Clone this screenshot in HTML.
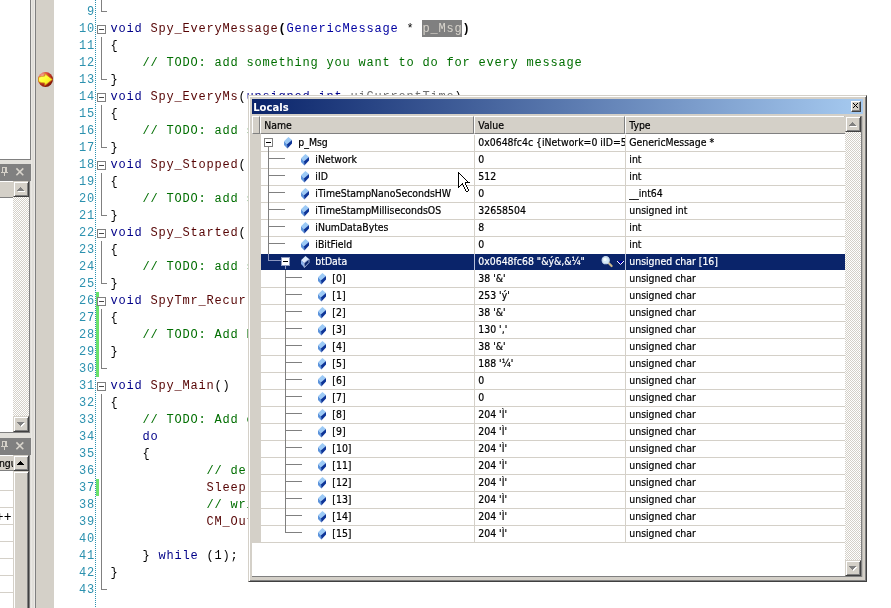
<!DOCTYPE html><html><head><meta charset="utf-8"><title>Locals</title><style>
html,body{margin:0;padding:0}
body{width:891px;height:608px;overflow:hidden;background:#fff;position:relative}
div,span,svg{position:absolute;box-sizing:border-box}
.r{position:absolute}
.code{font-family:"Liberation Mono",monospace;font-size:12px;letter-spacing:0.8px;line-height:17px;height:17px;white-space:pre;color:#000}
.code span{position:static}
.ln{left:62px;width:33.1px;text-align:right;color:#2b91af}
.tx{left:110.4px}
.k{color:#000088}.i{color:#560404}.t{color:#0000a0}.c{color:#006e00}.b{font-weight:bold}
.hl{color:#d8d4cc}.p{color:#707070}
.ui{-webkit-text-stroke-width:0.2px;font-family:"DejaVu Sans Condensed","DejaVu Sans","Liberation Sans",sans-serif;font-stretch:condensed;font-size:10.4px;line-height:17px;height:17px;white-space:pre;color:#000}
.ui span{position:static}
.chk{background-color:#fff;background-image:conic-gradient(#d4d0c8 25%,#fff 0 50%,#d4d0c8 0 75%,#fff 0);background-size:2px 2px}
.btn{background:#d4d0c8;border:1px solid;border-color:#d4d0c8 #404040 #404040 #d4d0c8;box-shadow:inset 1px 1px 0 #fff,inset -1px -1px 0 #808080}
</style></head><body><div id="root" style="left:0;top:0;width:891px;height:608px;will-change:transform">
<div class="" style="left:31px;top:0px;width:4px;height:608px;background:linear-gradient(90deg,#eae8e4 0 1px,#e1dfda 1px 3px,#ebe9e6 3px);"></div>
<div class="" style="left:35px;top:0px;width:1px;height:608px;background:#808080;"></div>
<div class="" style="left:36px;top:0px;width:18px;height:608px;background:#d4d0c8;"></div>
<div class="" style="left:30px;top:0px;width:1px;height:160px;background:#808080;"></div>
<div class="" style="left:0px;top:159px;width:31px;height:1px;background:#808080;"></div>
<div class="" style="left:0px;top:160px;width:31px;height:4px;background:#e2e0db;"></div>
<svg style="left:0;top:164px" width="31" height="17" viewBox="0 0 31 17" shape-rendering="crispEdges"><rect width="31" height="17" fill="#808080"/><g fill="#d4d0c8"><rect x="2" y="3" width="5" height="1"/><rect x="2" y="3" width="1" height="5"/><rect x="5" y="3" width="2" height="5"/><rect x="1" y="8" width="7" height="1"/><rect x="4" y="9" width="1" height="3"/></g><g stroke="#d8d4cc" stroke-width="1.55" shape-rendering="auto"><path d="M16.4 4.4 L23.3 11.3 M23.3 4.4 L16.4 11.3" fill="none"/></g></svg>
<div class="" style="left:0px;top:181px;width:29px;height:251px;background:#d4d0c8;"></div>
<div class="" style="left:29px;top:181px;width:1px;height:252px;background:#808080;"></div>
<div class="" style="left:30px;top:181px;width:1px;height:257px;background:#e1dfda;"></div>
<div class="" style="left:0px;top:181px;width:13px;height:17px;background:#d4d0c8;border-top:1px solid #fff;border-bottom:1px solid #808080"></div>
<div class="" style="left:0px;top:198px;width:13px;height:234px;background:#fff;"></div>
<div class="chk" style="left:13px;top:197px;width:16px;height:219px;background:;"></div>
<div class="btn" style="left:13px;top:181px;width:16px;height:16px"></div>
<svg style="left:0;top:0" width="891" height="608" shape-rendering="crispEdges"><path d="M20 187 h1 v1 h1 v1 h1 v1 h1 v1 h-7 v-1 h1 v-1 h1 v-1 h1 z" fill="#fff" transform="translate(1,1)"/><path d="M20 187 h1 v1 h1 v1 h1 v1 h1 v1 h-7 v-1 h1 v-1 h1 v-1 h1 z" fill="#808080"/></svg>
<div class="btn" style="left:13px;top:416px;width:16px;height:16px"></div>
<svg style="left:0;top:0" width="891" height="608" shape-rendering="crispEdges"><path d="M17 422 h7 v1 h-1 v1 h-1 v1 h-1 v1 h-1 v-1 h-1 v-1 h-1 v-1 h-1 z" fill="#fff" transform="translate(1,1)"/><path d="M17 422 h7 v1 h-1 v1 h-1 v1 h-1 v1 h-1 v-1 h-1 v-1 h-1 v-1 h-1 z" fill="#808080"/></svg>
<div class="" style="left:0px;top:432px;width:30px;height:1px;background:#808080;"></div>
<div class="" style="left:0px;top:433px;width:31px;height:5px;background:#e2e0db;"></div>
<svg style="left:0;top:438px" width="31" height="17" viewBox="0 0 31 17" shape-rendering="crispEdges"><rect width="31" height="17" fill="#808080"/><g fill="#d4d0c8"><rect x="2" y="3" width="5" height="1"/><rect x="2" y="3" width="1" height="5"/><rect x="5" y="3" width="2" height="5"/><rect x="1" y="8" width="7" height="1"/><rect x="4" y="9" width="1" height="3"/></g><g stroke="#d8d4cc" stroke-width="1.55" shape-rendering="auto"><path d="M16.4 4.4 L23.3 11.3 M23.3 4.4 L16.4 11.3" fill="none"/></g></svg>
<div class="" style="left:0px;top:455px;width:29px;height:153px;background:#d4d0c8;"></div>
<div class="" style="left:29px;top:455px;width:1px;height:153px;background:#808080;"></div>
<div class="" style="left:30px;top:455px;width:1px;height:153px;background:#e1dfda;"></div>
<div class="" style="left:0px;top:455px;width:13px;height:16px;background:#d4d0c8;border-top:1px solid #fff;border-bottom:1px solid #808080"></div>
<div class="ui" style="left:-12px;top:455px;width:25px;overflow:hidden">Langu</div>
<div class="" style="left:0px;top:471px;width:13px;height:137px;background:#fff;"></div>
<div class="" style="left:0px;top:490px;width:13px;height:1px;background:#d4d0c8;"></div>
<div class="" style="left:0px;top:507px;width:13px;height:1px;background:#d4d0c8;"></div>
<div class="" style="left:0px;top:524px;width:13px;height:1px;background:#d4d0c8;"></div>
<div class="" style="left:0px;top:541px;width:13px;height:1px;background:#d4d0c8;"></div>
<div class="" style="left:0px;top:558px;width:13px;height:1px;background:#d4d0c8;"></div>
<div class="" style="left:0px;top:575px;width:13px;height:1px;background:#d4d0c8;"></div>
<div class="" style="left:0px;top:592px;width:13px;height:1px;background:#d4d0c8;"></div>
<div class="ui" style="left:-20px;top:508px;width:31.5px;text-align:right">C++</div>
<div class="btn" style="left:13px;top:455px;width:16px;height:16px"></div>
<svg style="left:0;top:0" width="891" height="608" shape-rendering="crispEdges"><path d="M20 461 h1 v1 h1 v1 h1 v1 h1 v1 h-7 v-1 h1 v-1 h1 v-1 h1 z" fill="#000"/></svg>
<div class="btn" style="left:13px;top:471px;width:16px;height:150px"></div>
<div style="left:95px;top:0;width:1px;height:608px;background-image:linear-gradient(#2b91af 50%,#fff 0);background-size:1px 2px"></div>
<div class="" style="left:422px;top:20px;width:40px;height:17px;background:#808080;"></div>
<div class="" style="left:96px;top:292px;width:3px;height:85px;background:#6ce26c;"></div>
<div class="" style="left:96px;top:479px;width:3px;height:17px;background:#6ce26c;"></div>
<div class="" style="left:101px;top:0px;width:1px;height:12px;background:#808080;"></div>
<div class="" style="left:101px;top:11px;width:6px;height:1px;background:#808080;"></div>
<div style="left:97px;top:25px;width:9px;height:9px;background:#fff;border:1px solid #808080"></div>
<div class="" style="left:99px;top:29px;width:5px;height:1px;background:#484848;"></div>
<div class="" style="left:101px;top:37px;width:1px;height:43px;background:#808080;"></div>
<div class="" style="left:101px;top:79px;width:6px;height:1px;background:#808080;"></div>
<div style="left:97px;top:93px;width:9px;height:9px;background:#fff;border:1px solid #808080"></div>
<div class="" style="left:99px;top:97px;width:5px;height:1px;background:#484848;"></div>
<div class="" style="left:101px;top:105px;width:1px;height:43px;background:#808080;"></div>
<div class="" style="left:101px;top:147px;width:6px;height:1px;background:#808080;"></div>
<div style="left:97px;top:161px;width:9px;height:9px;background:#fff;border:1px solid #808080"></div>
<div class="" style="left:99px;top:165px;width:5px;height:1px;background:#484848;"></div>
<div class="" style="left:101px;top:173px;width:1px;height:43px;background:#808080;"></div>
<div class="" style="left:101px;top:215px;width:6px;height:1px;background:#808080;"></div>
<div style="left:97px;top:229px;width:9px;height:9px;background:#fff;border:1px solid #808080"></div>
<div class="" style="left:99px;top:233px;width:5px;height:1px;background:#484848;"></div>
<div class="" style="left:101px;top:241px;width:1px;height:43px;background:#808080;"></div>
<div class="" style="left:101px;top:283px;width:6px;height:1px;background:#808080;"></div>
<div style="left:97px;top:297px;width:9px;height:9px;background:#fff;border:1px solid #808080"></div>
<div class="" style="left:99px;top:301px;width:5px;height:1px;background:#484848;"></div>
<div class="" style="left:101px;top:309px;width:1px;height:60px;background:#808080;"></div>
<div class="" style="left:101px;top:368px;width:6px;height:1px;background:#808080;"></div>
<div style="left:97px;top:382px;width:9px;height:9px;background:#fff;border:1px solid #808080"></div>
<div class="" style="left:99px;top:386px;width:5px;height:1px;background:#484848;"></div>
<div class="" style="left:101px;top:394px;width:1px;height:196px;background:#808080;"></div>
<div class="" style="left:101px;top:589px;width:6px;height:1px;background:#808080;"></div>
<div class="code ln" style="top:4px">9</div>
<div class="code ln" style="top:21px">10</div>
<div class="code tx" style="top:21px"><span class="k">void</span> <span class="i">Spy_EveryMessage</span><span class="b">(</span><span class="t">GenericMessage</span> * <span class="hl">p_Msg</span><span class="b">)</span></div>
<div class="code ln" style="top:38px">11</div>
<div class="code tx" style="top:38px">{</div>
<div class="code ln" style="top:55px">12</div>
<div class="code tx" style="top:55px">    <span class="c">// TODO: add something you want to do for every message</span></div>
<div class="code ln" style="top:72px">13</div>
<div class="code tx" style="top:72px">}</div>
<div class="code ln" style="top:89px">14</div>
<div class="code tx" style="top:89px"><span class="k">void</span> <span class="i">Spy_EveryMs</span>(<span class="k">unsigned int</span> <span class="p">uiCurrentTime</span>)</div>
<div class="code ln" style="top:106px">15</div>
<div class="code tx" style="top:106px">{</div>
<div class="code ln" style="top:123px">16</div>
<div class="code tx" style="top:123px">    <span class="c">// TODO: add something you want to do every millisecond</span></div>
<div class="code ln" style="top:140px">17</div>
<div class="code tx" style="top:140px">}</div>
<div class="code ln" style="top:157px">18</div>
<div class="code tx" style="top:157px"><span class="k">void</span> <span class="i">Spy_Stopped</span>()</div>
<div class="code ln" style="top:174px">19</div>
<div class="code tx" style="top:174px">{</div>
<div class="code ln" style="top:191px">20</div>
<div class="code tx" style="top:191px">    <span class="c">// TODO: add stopped code</span></div>
<div class="code ln" style="top:208px">21</div>
<div class="code tx" style="top:208px">}</div>
<div class="code ln" style="top:225px">22</div>
<div class="code tx" style="top:225px"><span class="k">void</span> <span class="i">Spy_Started</span>()</div>
<div class="code ln" style="top:242px">23</div>
<div class="code tx" style="top:242px">{</div>
<div class="code ln" style="top:259px">24</div>
<div class="code tx" style="top:259px">    <span class="c">// TODO: add started code</span></div>
<div class="code ln" style="top:276px">25</div>
<div class="code tx" style="top:276px">}</div>
<div class="code ln" style="top:293px">26</div>
<div class="code tx" style="top:293px"><span class="k">void</span> <span class="i">SpyTmr_Recurring_1ms</span>()</div>
<div class="code ln" style="top:310px">27</div>
<div class="code tx" style="top:310px">{</div>
<div class="code ln" style="top:327px">28</div>
<div class="code tx" style="top:327px">    <span class="c">// TODO: Add Event Code</span></div>
<div class="code ln" style="top:344px">29</div>
<div class="code tx" style="top:344px">}</div>
<div class="code ln" style="top:361px">30</div>
<div class="code ln" style="top:378px">31</div>
<div class="code tx" style="top:378px"><span class="k">void</span> <span class="i">Spy_Main</span>()</div>
<div class="code ln" style="top:395px">32</div>
<div class="code tx" style="top:395px">{</div>
<div class="code ln" style="top:412px">33</div>
<div class="code tx" style="top:412px">    <span class="c">// TODO: Add code here to run every time Spy is run</span></div>
<div class="code ln" style="top:429px">34</div>
<div class="code tx" style="top:429px">    <span class="k">do</span></div>
<div class="code ln" style="top:446px">35</div>
<div class="code tx" style="top:446px">    {</div>
<div class="code ln" style="top:463px">36</div>
<div class="code tx" style="top:463px">            <span class="c">// delay for 10 ms</span></div>
<div class="code ln" style="top:480px">37</div>
<div class="code tx" style="top:480px">            <span class="i">Sleep</span>(10);</div>
<div class="code ln" style="top:497px">38</div>
<div class="code tx" style="top:497px">            <span class="c">// write to output</span></div>
<div class="code ln" style="top:514px">39</div>
<div class="code tx" style="top:514px">            <span class="i">CM_OutputPrint</span>();</div>
<div class="code ln" style="top:531px">40</div>
<div class="code ln" style="top:548px">41</div>
<div class="code tx" style="top:548px">    } <span class="k">while</span> (1);</div>
<div class="code ln" style="top:565px">42</div>
<div class="code tx" style="top:565px">}</div>
<div class="code ln" style="top:582px">43</div>
<svg style="left:37px;top:71px" width="17" height="17" viewBox="0 0 17 17">
<defs><radialGradient id="bp" cx="0.3" cy="0.25" r="0.85"><stop offset="0" stop-color="#f8b0a0"/><stop offset="0.4" stop-color="#dc4838"/><stop offset="0.8" stop-color="#9a200c"/><stop offset="1" stop-color="#6a1204"/></radialGradient>
<linearGradient id="ar" x1="0" y1="0" x2="1" y2="1"><stop offset="0" stop-color="#ffff80"/><stop offset="0.5" stop-color="#ffff30"/><stop offset="1" stop-color="#f4d820"/></linearGradient></defs>
<circle cx="8.5" cy="8.5" r="7.5" fill="url(#bp)"/>
<path d="M1.6 6.3 Q1.4 8.5 1.6 10.7 Q4 11.9 7.8 12 V14.4 L15.4 8.5 L7.8 2.6 V5 Q4 5.1 1.6 6.3 Z" fill="url(#ar)" stroke="#d08818" stroke-width="0.8" stroke-linejoin="round"/>
</svg>
<div id="win" style="left:248px;top:95px;width:619px;height:487px;background:#d4d0c8;border:1px solid;border-color:#d4d0c8 #404040 #404040 #d4d0c8;box-shadow:inset 1px 1px 0 #fff,inset -1px -1px 0 #808080"></div>
<div class="" style="left:252px;top:99px;width:611px;height:15px;background:linear-gradient(90deg,#0a246a,#a6caf0);"></div>
<div class="ui" style="left:253.2px;top:99px;color:#fff;font-weight:bold;-webkit-text-stroke-width:0;font-size:11.2px">Locals</div>
<div style="left:851px;top:101px;width:10px;height:11px;background:#d4d0c8;border:1px solid;border-color:#fff #404040 #404040 #fff;box-shadow:inset -1px -1px 0 #808080"></div>
<svg style="left:853px;top:103px" width="5" height="5" viewBox="0 0 5 5" shape-rendering="crispEdges"><path d="M0 0h1v1h1v1h1v1h1v1h1v1h-1v-1h-1v-1h-1v-1h-1v-1h-1z M4 0h1v1h-1v1h-1v-1h1z M1 3h1v1h-1v1h-1v-1h1z" fill="#000"/></svg>
<div style="left:252px;top:116px;width:8px;height:18px;background:#d4d0c8;border:1px solid;border-color:#fff #808080 #808080 #fff"></div>
<div style="left:260px;top:116px;width:214px;height:18px;background:#d4d0c8;border:1px solid;border-color:#fff #808080 #808080 #fff"></div>
<div class="ui" style="left:264.3px;top:117px">Name</div>
<div style="left:474px;top:116px;width:151px;height:18px;background:#d4d0c8;border:1px solid;border-color:#fff #808080 #808080 #fff"></div>
<div class="ui" style="left:478.3px;top:117px">Value</div>
<div style="left:625px;top:116px;width:220px;height:18px;background:#d4d0c8;border:1px solid;border-color:#fff #808080 #808080 #fff"></div>
<div class="ui" style="left:629.3px;top:117px">Type</div>
<div class="" style="left:844px;top:117px;width:1px;height:16px;background:#d4d0c8;"></div>
<div class="" style="left:261px;top:134px;width:584px;height:442px;background:#fff;"></div>
<div class="" style="left:252px;top:543px;width:593px;height:33px;background:#fff;"></div>
<div class="" style="left:261px;top:151px;width:584px;height:1px;background:#d4d0c8;"></div>
<div class="" style="left:261px;top:168px;width:584px;height:1px;background:#d4d0c8;"></div>
<div class="" style="left:261px;top:185px;width:584px;height:1px;background:#d4d0c8;"></div>
<div class="" style="left:261px;top:202px;width:584px;height:1px;background:#d4d0c8;"></div>
<div class="" style="left:261px;top:219px;width:584px;height:1px;background:#d4d0c8;"></div>
<div class="" style="left:261px;top:236px;width:584px;height:1px;background:#d4d0c8;"></div>
<div class="" style="left:261px;top:287px;width:584px;height:1px;background:#d4d0c8;"></div>
<div class="" style="left:261px;top:304px;width:584px;height:1px;background:#d4d0c8;"></div>
<div class="" style="left:261px;top:321px;width:584px;height:1px;background:#d4d0c8;"></div>
<div class="" style="left:261px;top:338px;width:584px;height:1px;background:#d4d0c8;"></div>
<div class="" style="left:261px;top:355px;width:584px;height:1px;background:#d4d0c8;"></div>
<div class="" style="left:261px;top:372px;width:584px;height:1px;background:#d4d0c8;"></div>
<div class="" style="left:261px;top:389px;width:584px;height:1px;background:#d4d0c8;"></div>
<div class="" style="left:261px;top:406px;width:584px;height:1px;background:#d4d0c8;"></div>
<div class="" style="left:261px;top:423px;width:584px;height:1px;background:#d4d0c8;"></div>
<div class="" style="left:261px;top:440px;width:584px;height:1px;background:#d4d0c8;"></div>
<div class="" style="left:261px;top:457px;width:584px;height:1px;background:#d4d0c8;"></div>
<div class="" style="left:261px;top:474px;width:584px;height:1px;background:#d4d0c8;"></div>
<div class="" style="left:261px;top:491px;width:584px;height:1px;background:#d4d0c8;"></div>
<div class="" style="left:261px;top:508px;width:584px;height:1px;background:#d4d0c8;"></div>
<div class="" style="left:261px;top:525px;width:584px;height:1px;background:#d4d0c8;"></div>
<div class="" style="left:261px;top:542px;width:584px;height:1px;background:#d4d0c8;"></div>
<div class="" style="left:474px;top:135px;width:1px;height:408px;background:#d4d0c8;"></div>
<div class="" style="left:625px;top:135px;width:1px;height:408px;background:#d4d0c8;"></div>
<div class="" style="left:261px;top:254px;width:584px;height:16px;background:#0a246a;"></div>
<div class="" style="left:474px;top:254px;width:1px;height:16px;background:#b8c0dc;"></div>
<div class="" style="left:625px;top:254px;width:1px;height:16px;background:#b8c0dc;"></div>
<div class="" style="left:268px;top:147px;width:1px;height:113px;background:#808080;"></div>
<div class="" style="left:268px;top:254px;width:1px;height:7px;background:#8c98c0;"></div>
<div class="" style="left:268px;top:158px;width:17px;height:1px;background:#808080;"></div>
<div class="" style="left:268px;top:175px;width:17px;height:1px;background:#808080;"></div>
<div class="" style="left:268px;top:192px;width:17px;height:1px;background:#808080;"></div>
<div class="" style="left:268px;top:209px;width:17px;height:1px;background:#808080;"></div>
<div class="" style="left:268px;top:226px;width:17px;height:1px;background:#808080;"></div>
<div class="" style="left:268px;top:243px;width:17px;height:1px;background:#808080;"></div>
<div class="" style="left:268px;top:260px;width:13px;height:1px;background:#8c98c0;"></div>
<div class="" style="left:285px;top:266px;width:1px;height:3px;background:#8c98c0;"></div>
<div class="" style="left:285px;top:270px;width:1px;height:263px;background:#808080;"></div>
<div class="" style="left:285px;top:277px;width:17px;height:1px;background:#808080;"></div>
<div class="" style="left:285px;top:294px;width:17px;height:1px;background:#808080;"></div>
<div class="" style="left:285px;top:311px;width:17px;height:1px;background:#808080;"></div>
<div class="" style="left:285px;top:328px;width:17px;height:1px;background:#808080;"></div>
<div class="" style="left:285px;top:345px;width:17px;height:1px;background:#808080;"></div>
<div class="" style="left:285px;top:362px;width:17px;height:1px;background:#808080;"></div>
<div class="" style="left:285px;top:379px;width:17px;height:1px;background:#808080;"></div>
<div class="" style="left:285px;top:396px;width:17px;height:1px;background:#808080;"></div>
<div class="" style="left:285px;top:413px;width:17px;height:1px;background:#808080;"></div>
<div class="" style="left:285px;top:430px;width:17px;height:1px;background:#808080;"></div>
<div class="" style="left:285px;top:447px;width:17px;height:1px;background:#808080;"></div>
<div class="" style="left:285px;top:464px;width:17px;height:1px;background:#808080;"></div>
<div class="" style="left:285px;top:481px;width:17px;height:1px;background:#808080;"></div>
<div class="" style="left:285px;top:498px;width:17px;height:1px;background:#808080;"></div>
<div class="" style="left:285px;top:515px;width:17px;height:1px;background:#808080;"></div>
<div class="" style="left:285px;top:532px;width:17px;height:1px;background:#808080;"></div>
<div style="left:264px;top:138px;width:9px;height:9px;background:#fff;border:1px solid #808080"></div>
<div class="" style="left:266px;top:142px;width:5px;height:1px;background:#000;"></div>
<div style="left:281px;top:257px;width:9px;height:9px;background:#fff;border:1px solid #8c98c0"></div>
<div class="" style="left:283px;top:261px;width:5px;height:1px;background:#000;"></div>
<svg style="left:284px;top:137px" width="9" height="12" viewBox="0 0 9 12"><path d="M4.4 0 L8 3 L3 7.2 L0 4.3 Z" fill="#9ccaf6"/><path d="M0 4.3 L3 7.2 L3.4 11.5 L0 8 Z" fill="#5c94dc"/><path d="M3 7.2 L8 3 L8 6.6 L3.4 11.5 Z" fill="#0c3498"/></svg>
<div class="ui" style="left:298.3px;top:134px;width:175.7px;overflow:hidden;color:#000">p_Msg</div>
<div class="ui" style="left:478.3px;top:134px;width:146.7px;overflow:hidden;color:#000">0x0648fc4c {iNetwork=0 iID=512 iTimeStampNanoSecondsHW=0 ...}</div>
<div class="ui" style="left:629.3px;top:134px;width:215.70000000000005px;overflow:hidden;color:#000">GenericMessage *</div>
<svg style="left:301px;top:154px" width="9" height="12" viewBox="0 0 9 12"><path d="M4.4 0 L8 3 L3 7.2 L0 4.3 Z" fill="#9ccaf6"/><path d="M0 4.3 L3 7.2 L3.4 11.5 L0 8 Z" fill="#5c94dc"/><path d="M3 7.2 L8 3 L8 6.6 L3.4 11.5 Z" fill="#0c3498"/></svg>
<div class="ui" style="left:315.3px;top:151px;width:158.7px;overflow:hidden;color:#000">iNetwork</div>
<div class="ui" style="left:478.3px;top:151px;width:146.7px;overflow:hidden;color:#000">0</div>
<div class="ui" style="left:629.3px;top:151px;width:215.70000000000005px;overflow:hidden;color:#000">int</div>
<svg style="left:301px;top:171px" width="9" height="12" viewBox="0 0 9 12"><path d="M4.4 0 L8 3 L3 7.2 L0 4.3 Z" fill="#9ccaf6"/><path d="M0 4.3 L3 7.2 L3.4 11.5 L0 8 Z" fill="#5c94dc"/><path d="M3 7.2 L8 3 L8 6.6 L3.4 11.5 Z" fill="#0c3498"/></svg>
<div class="ui" style="left:315.3px;top:168px;width:158.7px;overflow:hidden;color:#000">iID</div>
<div class="ui" style="left:478.3px;top:168px;width:146.7px;overflow:hidden;color:#000">512</div>
<div class="ui" style="left:629.3px;top:168px;width:215.70000000000005px;overflow:hidden;color:#000">int</div>
<svg style="left:301px;top:188px" width="9" height="12" viewBox="0 0 9 12"><path d="M4.4 0 L8 3 L3 7.2 L0 4.3 Z" fill="#9ccaf6"/><path d="M0 4.3 L3 7.2 L3.4 11.5 L0 8 Z" fill="#5c94dc"/><path d="M3 7.2 L8 3 L8 6.6 L3.4 11.5 Z" fill="#0c3498"/></svg>
<div class="ui" style="left:315.3px;top:185px;width:158.7px;overflow:hidden;color:#000">iTimeStampNanoSecondsHW</div>
<div class="ui" style="left:478.3px;top:185px;width:146.7px;overflow:hidden;color:#000">0</div>
<div class="ui" style="left:629.3px;top:185px;width:215.70000000000005px;overflow:hidden;color:#000">__int64</div>
<svg style="left:301px;top:205px" width="9" height="12" viewBox="0 0 9 12"><path d="M4.4 0 L8 3 L3 7.2 L0 4.3 Z" fill="#9ccaf6"/><path d="M0 4.3 L3 7.2 L3.4 11.5 L0 8 Z" fill="#5c94dc"/><path d="M3 7.2 L8 3 L8 6.6 L3.4 11.5 Z" fill="#0c3498"/></svg>
<div class="ui" style="left:315.3px;top:202px;width:158.7px;overflow:hidden;color:#000">iTimeStampMillisecondsOS</div>
<div class="ui" style="left:478.3px;top:202px;width:146.7px;overflow:hidden;color:#000">32658504</div>
<div class="ui" style="left:629.3px;top:202px;width:215.70000000000005px;overflow:hidden;color:#000">unsigned int</div>
<svg style="left:301px;top:222px" width="9" height="12" viewBox="0 0 9 12"><path d="M4.4 0 L8 3 L3 7.2 L0 4.3 Z" fill="#9ccaf6"/><path d="M0 4.3 L3 7.2 L3.4 11.5 L0 8 Z" fill="#5c94dc"/><path d="M3 7.2 L8 3 L8 6.6 L3.4 11.5 Z" fill="#0c3498"/></svg>
<div class="ui" style="left:315.3px;top:219px;width:158.7px;overflow:hidden;color:#000">iNumDataBytes</div>
<div class="ui" style="left:478.3px;top:219px;width:146.7px;overflow:hidden;color:#000">8</div>
<div class="ui" style="left:629.3px;top:219px;width:215.70000000000005px;overflow:hidden;color:#000">int</div>
<svg style="left:301px;top:239px" width="9" height="12" viewBox="0 0 9 12"><path d="M4.4 0 L8 3 L3 7.2 L0 4.3 Z" fill="#9ccaf6"/><path d="M0 4.3 L3 7.2 L3.4 11.5 L0 8 Z" fill="#5c94dc"/><path d="M3 7.2 L8 3 L8 6.6 L3.4 11.5 Z" fill="#0c3498"/></svg>
<div class="ui" style="left:315.3px;top:236px;width:158.7px;overflow:hidden;color:#000">iBitField</div>
<div class="ui" style="left:478.3px;top:236px;width:146.7px;overflow:hidden;color:#000">0</div>
<div class="ui" style="left:629.3px;top:236px;width:215.70000000000005px;overflow:hidden;color:#000">int</div>
<svg style="left:301px;top:256px" width="9" height="12" viewBox="0 0 9 12"><path d="M4.4 0 L8 3 L3 7.2 L0 4.3 Z" fill="#dce9fc"/><path d="M0 4.3 L3 7.2 L3.4 11.5 L0 8 Z" fill="#86aeea"/><path d="M3 7.2 L8 3 L8 6.6 L3.4 11.5 Z" fill="#0a246a"/></svg>
<svg style="left:301px;top:256px" width="9" height="12" viewBox="0 0 9 12"><path d="M3 7.2 L8 3 L8 6.6 L3.4 11.5 Z" fill="none" stroke="#c8d8f4" stroke-width="0.8"/></svg>
<div class="ui" style="left:315.3px;top:253px;width:158.7px;overflow:hidden;color:#fff">btData</div>
<div class="ui" style="left:478.3px;top:253px;width:146.7px;overflow:hidden;color:#fff">0x0648fc68 "&amp;ý&amp;‚&amp;¼"</div>
<div class="ui" style="left:629.3px;top:253px;width:215.70000000000005px;overflow:hidden;color:#fff">unsigned char [16]</div>
<svg style="left:318px;top:273px" width="9" height="12" viewBox="0 0 9 12"><path d="M4.4 0 L8 3 L3 7.2 L0 4.3 Z" fill="#9ccaf6"/><path d="M0 4.3 L3 7.2 L3.4 11.5 L0 8 Z" fill="#5c94dc"/><path d="M3 7.2 L8 3 L8 6.6 L3.4 11.5 Z" fill="#0c3498"/></svg>
<div class="ui" style="left:332.3px;top:270px;width:141.7px;overflow:hidden;color:#000">[0]</div>
<div class="ui" style="left:478.3px;top:270px;width:146.7px;overflow:hidden;color:#000">38 '&amp;'</div>
<div class="ui" style="left:629.3px;top:270px;width:215.70000000000005px;overflow:hidden;color:#000">unsigned char</div>
<svg style="left:318px;top:290px" width="9" height="12" viewBox="0 0 9 12"><path d="M4.4 0 L8 3 L3 7.2 L0 4.3 Z" fill="#9ccaf6"/><path d="M0 4.3 L3 7.2 L3.4 11.5 L0 8 Z" fill="#5c94dc"/><path d="M3 7.2 L8 3 L8 6.6 L3.4 11.5 Z" fill="#0c3498"/></svg>
<div class="ui" style="left:332.3px;top:287px;width:141.7px;overflow:hidden;color:#000">[1]</div>
<div class="ui" style="left:478.3px;top:287px;width:146.7px;overflow:hidden;color:#000">253 'ý'</div>
<div class="ui" style="left:629.3px;top:287px;width:215.70000000000005px;overflow:hidden;color:#000">unsigned char</div>
<svg style="left:318px;top:307px" width="9" height="12" viewBox="0 0 9 12"><path d="M4.4 0 L8 3 L3 7.2 L0 4.3 Z" fill="#9ccaf6"/><path d="M0 4.3 L3 7.2 L3.4 11.5 L0 8 Z" fill="#5c94dc"/><path d="M3 7.2 L8 3 L8 6.6 L3.4 11.5 Z" fill="#0c3498"/></svg>
<div class="ui" style="left:332.3px;top:304px;width:141.7px;overflow:hidden;color:#000">[2]</div>
<div class="ui" style="left:478.3px;top:304px;width:146.7px;overflow:hidden;color:#000">38 '&amp;'</div>
<div class="ui" style="left:629.3px;top:304px;width:215.70000000000005px;overflow:hidden;color:#000">unsigned char</div>
<svg style="left:318px;top:324px" width="9" height="12" viewBox="0 0 9 12"><path d="M4.4 0 L8 3 L3 7.2 L0 4.3 Z" fill="#9ccaf6"/><path d="M0 4.3 L3 7.2 L3.4 11.5 L0 8 Z" fill="#5c94dc"/><path d="M3 7.2 L8 3 L8 6.6 L3.4 11.5 Z" fill="#0c3498"/></svg>
<div class="ui" style="left:332.3px;top:321px;width:141.7px;overflow:hidden;color:#000">[3]</div>
<div class="ui" style="left:478.3px;top:321px;width:146.7px;overflow:hidden;color:#000">130 '‚'</div>
<div class="ui" style="left:629.3px;top:321px;width:215.70000000000005px;overflow:hidden;color:#000">unsigned char</div>
<svg style="left:318px;top:341px" width="9" height="12" viewBox="0 0 9 12"><path d="M4.4 0 L8 3 L3 7.2 L0 4.3 Z" fill="#9ccaf6"/><path d="M0 4.3 L3 7.2 L3.4 11.5 L0 8 Z" fill="#5c94dc"/><path d="M3 7.2 L8 3 L8 6.6 L3.4 11.5 Z" fill="#0c3498"/></svg>
<div class="ui" style="left:332.3px;top:338px;width:141.7px;overflow:hidden;color:#000">[4]</div>
<div class="ui" style="left:478.3px;top:338px;width:146.7px;overflow:hidden;color:#000">38 '&amp;'</div>
<div class="ui" style="left:629.3px;top:338px;width:215.70000000000005px;overflow:hidden;color:#000">unsigned char</div>
<svg style="left:318px;top:358px" width="9" height="12" viewBox="0 0 9 12"><path d="M4.4 0 L8 3 L3 7.2 L0 4.3 Z" fill="#9ccaf6"/><path d="M0 4.3 L3 7.2 L3.4 11.5 L0 8 Z" fill="#5c94dc"/><path d="M3 7.2 L8 3 L8 6.6 L3.4 11.5 Z" fill="#0c3498"/></svg>
<div class="ui" style="left:332.3px;top:355px;width:141.7px;overflow:hidden;color:#000">[5]</div>
<div class="ui" style="left:478.3px;top:355px;width:146.7px;overflow:hidden;color:#000">188 '¼'</div>
<div class="ui" style="left:629.3px;top:355px;width:215.70000000000005px;overflow:hidden;color:#000">unsigned char</div>
<svg style="left:318px;top:375px" width="9" height="12" viewBox="0 0 9 12"><path d="M4.4 0 L8 3 L3 7.2 L0 4.3 Z" fill="#9ccaf6"/><path d="M0 4.3 L3 7.2 L3.4 11.5 L0 8 Z" fill="#5c94dc"/><path d="M3 7.2 L8 3 L8 6.6 L3.4 11.5 Z" fill="#0c3498"/></svg>
<div class="ui" style="left:332.3px;top:372px;width:141.7px;overflow:hidden;color:#000">[6]</div>
<div class="ui" style="left:478.3px;top:372px;width:146.7px;overflow:hidden;color:#000">0</div>
<div class="ui" style="left:629.3px;top:372px;width:215.70000000000005px;overflow:hidden;color:#000">unsigned char</div>
<svg style="left:318px;top:392px" width="9" height="12" viewBox="0 0 9 12"><path d="M4.4 0 L8 3 L3 7.2 L0 4.3 Z" fill="#9ccaf6"/><path d="M0 4.3 L3 7.2 L3.4 11.5 L0 8 Z" fill="#5c94dc"/><path d="M3 7.2 L8 3 L8 6.6 L3.4 11.5 Z" fill="#0c3498"/></svg>
<div class="ui" style="left:332.3px;top:389px;width:141.7px;overflow:hidden;color:#000">[7]</div>
<div class="ui" style="left:478.3px;top:389px;width:146.7px;overflow:hidden;color:#000">0</div>
<div class="ui" style="left:629.3px;top:389px;width:215.70000000000005px;overflow:hidden;color:#000">unsigned char</div>
<svg style="left:318px;top:409px" width="9" height="12" viewBox="0 0 9 12"><path d="M4.4 0 L8 3 L3 7.2 L0 4.3 Z" fill="#9ccaf6"/><path d="M0 4.3 L3 7.2 L3.4 11.5 L0 8 Z" fill="#5c94dc"/><path d="M3 7.2 L8 3 L8 6.6 L3.4 11.5 Z" fill="#0c3498"/></svg>
<div class="ui" style="left:332.3px;top:406px;width:141.7px;overflow:hidden;color:#000">[8]</div>
<div class="ui" style="left:478.3px;top:406px;width:146.7px;overflow:hidden;color:#000">204 'Ì'</div>
<div class="ui" style="left:629.3px;top:406px;width:215.70000000000005px;overflow:hidden;color:#000">unsigned char</div>
<svg style="left:318px;top:426px" width="9" height="12" viewBox="0 0 9 12"><path d="M4.4 0 L8 3 L3 7.2 L0 4.3 Z" fill="#9ccaf6"/><path d="M0 4.3 L3 7.2 L3.4 11.5 L0 8 Z" fill="#5c94dc"/><path d="M3 7.2 L8 3 L8 6.6 L3.4 11.5 Z" fill="#0c3498"/></svg>
<div class="ui" style="left:332.3px;top:423px;width:141.7px;overflow:hidden;color:#000">[9]</div>
<div class="ui" style="left:478.3px;top:423px;width:146.7px;overflow:hidden;color:#000">204 'Ì'</div>
<div class="ui" style="left:629.3px;top:423px;width:215.70000000000005px;overflow:hidden;color:#000">unsigned char</div>
<svg style="left:318px;top:443px" width="9" height="12" viewBox="0 0 9 12"><path d="M4.4 0 L8 3 L3 7.2 L0 4.3 Z" fill="#9ccaf6"/><path d="M0 4.3 L3 7.2 L3.4 11.5 L0 8 Z" fill="#5c94dc"/><path d="M3 7.2 L8 3 L8 6.6 L3.4 11.5 Z" fill="#0c3498"/></svg>
<div class="ui" style="left:332.3px;top:440px;width:141.7px;overflow:hidden;color:#000">[10]</div>
<div class="ui" style="left:478.3px;top:440px;width:146.7px;overflow:hidden;color:#000">204 'Ì'</div>
<div class="ui" style="left:629.3px;top:440px;width:215.70000000000005px;overflow:hidden;color:#000">unsigned char</div>
<svg style="left:318px;top:460px" width="9" height="12" viewBox="0 0 9 12"><path d="M4.4 0 L8 3 L3 7.2 L0 4.3 Z" fill="#9ccaf6"/><path d="M0 4.3 L3 7.2 L3.4 11.5 L0 8 Z" fill="#5c94dc"/><path d="M3 7.2 L8 3 L8 6.6 L3.4 11.5 Z" fill="#0c3498"/></svg>
<div class="ui" style="left:332.3px;top:457px;width:141.7px;overflow:hidden;color:#000">[11]</div>
<div class="ui" style="left:478.3px;top:457px;width:146.7px;overflow:hidden;color:#000">204 'Ì'</div>
<div class="ui" style="left:629.3px;top:457px;width:215.70000000000005px;overflow:hidden;color:#000">unsigned char</div>
<svg style="left:318px;top:477px" width="9" height="12" viewBox="0 0 9 12"><path d="M4.4 0 L8 3 L3 7.2 L0 4.3 Z" fill="#9ccaf6"/><path d="M0 4.3 L3 7.2 L3.4 11.5 L0 8 Z" fill="#5c94dc"/><path d="M3 7.2 L8 3 L8 6.6 L3.4 11.5 Z" fill="#0c3498"/></svg>
<div class="ui" style="left:332.3px;top:474px;width:141.7px;overflow:hidden;color:#000">[12]</div>
<div class="ui" style="left:478.3px;top:474px;width:146.7px;overflow:hidden;color:#000">204 'Ì'</div>
<div class="ui" style="left:629.3px;top:474px;width:215.70000000000005px;overflow:hidden;color:#000">unsigned char</div>
<svg style="left:318px;top:494px" width="9" height="12" viewBox="0 0 9 12"><path d="M4.4 0 L8 3 L3 7.2 L0 4.3 Z" fill="#9ccaf6"/><path d="M0 4.3 L3 7.2 L3.4 11.5 L0 8 Z" fill="#5c94dc"/><path d="M3 7.2 L8 3 L8 6.6 L3.4 11.5 Z" fill="#0c3498"/></svg>
<div class="ui" style="left:332.3px;top:491px;width:141.7px;overflow:hidden;color:#000">[13]</div>
<div class="ui" style="left:478.3px;top:491px;width:146.7px;overflow:hidden;color:#000">204 'Ì'</div>
<div class="ui" style="left:629.3px;top:491px;width:215.70000000000005px;overflow:hidden;color:#000">unsigned char</div>
<svg style="left:318px;top:511px" width="9" height="12" viewBox="0 0 9 12"><path d="M4.4 0 L8 3 L3 7.2 L0 4.3 Z" fill="#9ccaf6"/><path d="M0 4.3 L3 7.2 L3.4 11.5 L0 8 Z" fill="#5c94dc"/><path d="M3 7.2 L8 3 L8 6.6 L3.4 11.5 Z" fill="#0c3498"/></svg>
<div class="ui" style="left:332.3px;top:508px;width:141.7px;overflow:hidden;color:#000">[14]</div>
<div class="ui" style="left:478.3px;top:508px;width:146.7px;overflow:hidden;color:#000">204 'Ì'</div>
<div class="ui" style="left:629.3px;top:508px;width:215.70000000000005px;overflow:hidden;color:#000">unsigned char</div>
<svg style="left:318px;top:528px" width="9" height="12" viewBox="0 0 9 12"><path d="M4.4 0 L8 3 L3 7.2 L0 4.3 Z" fill="#9ccaf6"/><path d="M0 4.3 L3 7.2 L3.4 11.5 L0 8 Z" fill="#5c94dc"/><path d="M3 7.2 L8 3 L8 6.6 L3.4 11.5 Z" fill="#0c3498"/></svg>
<div class="ui" style="left:332.3px;top:525px;width:141.7px;overflow:hidden;color:#000">[15]</div>
<div class="ui" style="left:478.3px;top:525px;width:146.7px;overflow:hidden;color:#000">204 'Ì'</div>
<div class="ui" style="left:629.3px;top:525px;width:215.70000000000005px;overflow:hidden;color:#000">unsigned char</div>
<svg style="left:601px;top:255px" width="13" height="13" viewBox="0 0 13 13"><path d="M7.6 8 L10.6 11" stroke="#cbb98c" stroke-width="2.2" stroke-linecap="round"/><circle cx="4.7" cy="5.2" r="3.6" fill="#d6ebf8" stroke="#c4d4e8" stroke-width="1.1"/><circle cx="4" cy="4.4" r="1.6" fill="#f4fafe"/></svg>
<svg style="left:616px;top:260px" width="9" height="6" viewBox="0 0 9 6"><path d="M1 1 L4.5 4.5 L8 1" fill="#0000a0" stroke="#fff" stroke-width="1"/></svg>
<div class="" style="left:861px;top:116px;width:1px;height:461px;background:#808080;"></div>
<div class="" style="left:862px;top:116px;width:1px;height:461px;background:#bcbab4;"></div>
<div class="" style="left:252px;top:576px;width:610px;height:1px;background:#808080;"></div>
<div class="chk" style="left:845px;top:116px;width:16px;height:460px;background:;"></div>
<div class="btn" style="left:845px;top:116px;width:16px;height:16px"></div>
<svg style="left:0;top:0" width="891" height="608" shape-rendering="crispEdges"><path d="M852 122 h1 v1 h1 v1 h1 v1 h1 v1 h-7 v-1 h1 v-1 h1 v-1 h1 z" fill="#fff" transform="translate(1,1)"/><path d="M852 122 h1 v1 h1 v1 h1 v1 h1 v1 h-7 v-1 h1 v-1 h1 v-1 h1 z" fill="#808080"/></svg>
<div class="btn" style="left:845px;top:560px;width:16px;height:16px"></div>
<svg style="left:0;top:0" width="891" height="608" shape-rendering="crispEdges"><path d="M849 566 h7 v1 h-1 v1 h-1 v1 h-1 v1 h-1 v-1 h-1 v-1 h-1 v-1 h-1 z" fill="#fff" transform="translate(1,1)"/><path d="M849 566 h7 v1 h-1 v1 h-1 v1 h-1 v1 h-1 v-1 h-1 v-1 h-1 v-1 h-1 z" fill="#808080"/></svg>
<svg style="left:458px;top:172px" width="12" height="20" viewBox="0 0 12 20" shape-rendering="crispEdges"><path d="M1 2h1v1h-1zM1 3h2v1h-2zM1 4h3v1h-3zM1 5h4v1h-4zM1 6h5v1h-5zM1 7h6v1h-6zM1 8h7v1h-7zM1 9h8v1h-8zM1 10h6v1h-6zM1 11h3v1h-3zM5 11h2v1h-2zM1 12h2v1h-2zM5 12h2v1h-2zM1 13h1v1h-1zM6 13h2v1h-2zM6 14h2v1h-2zM7 15h2v1h-2zM7 16h2v1h-2zM8 17h2v1h-2zM8 18h2v1h-2z" fill="#fff"/><path d="M0 0h1v1h-1zM0 1h2v1h-2zM0 2h1v1h-1zM2 2h1v1h-1zM0 3h1v1h-1zM3 3h1v1h-1zM0 4h1v1h-1zM4 4h1v1h-1zM0 5h1v1h-1zM5 5h1v1h-1zM0 6h1v1h-1zM6 6h1v1h-1zM0 7h1v1h-1zM7 7h1v1h-1zM0 8h1v1h-1zM8 8h1v1h-1zM0 9h1v1h-1zM9 9h1v1h-1zM0 10h1v1h-1zM7 10h5v1h-5zM0 11h1v1h-1zM4 11h1v1h-1zM7 11h1v1h-1zM0 12h1v1h-1zM3 12h2v1h-2zM7 12h1v1h-1zM0 13h1v1h-1zM2 13h1v1h-1zM5 13h1v1h-1zM8 13h1v1h-1zM0 14h2v1h-2zM5 14h1v1h-1zM8 14h1v1h-1zM0 15h1v1h-1zM6 15h1v1h-1zM9 15h1v1h-1zM6 16h1v1h-1zM9 16h1v1h-1zM7 17h1v1h-1zM10 17h1v1h-1zM7 18h1v1h-1zM10 18h1v1h-1zM8 19h2v1h-2z" fill="#000"/></svg>
</div></body></html>
